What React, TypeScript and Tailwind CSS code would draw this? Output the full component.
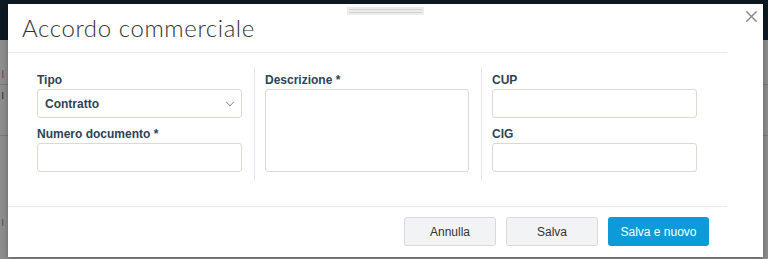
import { ChevronDown, X } from 'lucide-react';

const labelCls = "block text-[12px] font-bold text-[#2d4358] leading-[14px] mb-[2px]";
const inputCls = "w-full h-[29px] border border-[#dcdacd] rounded-[3px] bg-white";

const Field = ({ label, tall }: { label: string; tall?: boolean }) => (
  <div>
    <label className={labelCls}>{label}</label>
    <div className={tall ? "w-full h-[83px] border border-[#dcdacd] rounded-[3px] bg-white" : inputCls} />
  </div>
);

const App = () => {
  return (
    <div className="relative w-[768px] h-[259px] overflow-hidden bg-[#8d8d8d] font-['Liberation_Sans',Arial,sans-serif]">
      {/* page behind the overlay */}
      <div className="h-[40px] bg-[#0e1a23]" />
      <div className="flex flex-col text-[#2a2a2a] text-[20px] leading-none">
        <div className="h-[44px] pt-[24px] pl-[1px] font-['Lato',sans-serif] font-light text-[#3a3a3a] text-[16px]">ı</div>
        <div className="h-px bg-[#7a7a7a]" />
        <div className="h-[50px] pt-[4px] pl-[1px] text-[12px] text-[#333]">ı</div>
        <div className="h-px bg-[#7a7a7a]" />
        <div className="h-[80px] pt-[80px] pl-[1px] text-[12px] text-[#555]">ı</div>
      </div>

      {/* modal */}
      <div className="absolute left-[8px] top-[4px] w-[755px] h-[253px] bg-white shadow-[0_2px_6px_rgba(0,0,0,0.3)] flex flex-col">
        <div className="absolute left-[339px] top-[3px] w-[77px] h-[8px] bg-[#ececec] flex flex-col justify-center gap-[2px] px-[2px]">
          <div className="h-px bg-[#d2d2d2]" />
          <div className="h-px bg-[#d2d2d2]" />
        </div>
        <button className="absolute right-[2px] top-[3px] text-[#8a8a8a]">
          <X className="w-[19px] h-[19px]" strokeWidth={1.8} />
        </button>

        <div className="h-[49px] border-b border-[#e5ebf1] mr-[36px] pl-[14px] pt-[10px]">
          <h1 className="font-['Lato',sans-serif] font-light text-[24px] leading-[28px] text-[#333] tracking-[0.6px]">Accordo commerciale</h1>
        </div>

        <div className="flex h-[154px] pt-[20px] pl-[29px] border-b border-[#e5ebf1] mr-[36px]">
          <div className="w-[205px] flex flex-col gap-[9px]">
            <div>
              <label className={labelCls}>Tipo</label>
              <div className="w-full h-[29px] border border-[#dcdacd] rounded-[3px] bg-white flex items-center justify-between pl-[7px] pr-[4px]">
                <span className="text-[12px] font-bold text-[#2d4358]">Contratto</span>
                <ChevronDown className="w-[14px] h-[14px] text-[#8a8f95]" strokeWidth={1.8} />
              </div>
            </div>
            <Field label="Numero documento *" />
          </div>
          <div className="w-px h-[114px] bg-[#e8e8e8] ml-[12px] -mt-[6px]" />
          <div className="w-[204px] ml-[10px]">
            <Field label="Descrizione *" tall />
          </div>
          <div className="w-px h-[114px] bg-[#e8e8e8] ml-[12px] -mt-[6px]" />
          <div className="w-[205px] ml-[10px] flex flex-col gap-[9px]">
            <Field label="CUP" />
            <Field label="CIG" />
          </div>
        </div>

        <div className="flex justify-end gap-[10px] pt-[10px] pr-[54px]">
          <button className="w-[92px] h-[29px] rounded-[3px] border border-[#d6dade] bg-[#f1f3f5] text-[12px] text-[#333]">Annulla</button>
          <button className="w-[92px] h-[29px] rounded-[3px] border border-[#d6dade] bg-[#f1f3f5] text-[12px] text-[#333]">Salva</button>
          <button className="w-[101px] h-[29px] rounded-[3px] bg-[#0d9ad8] text-[12px] text-white">Salva e nuovo</button>
        </div>
      </div>
    </div>
  );
};

export default App;
